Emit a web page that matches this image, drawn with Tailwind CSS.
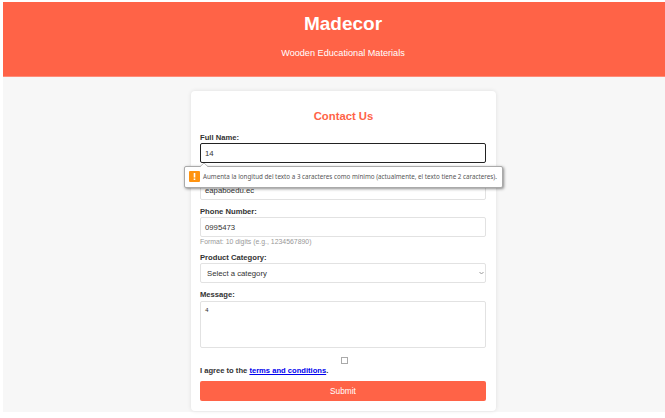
<!DOCTYPE html>
<html lang="en">
<head>
<meta charset="utf-8">
<title>Madecor</title>
<script src="https://cdn.jsdelivr.net/npm/@tailwindcss/browser@4"></script>
</head>
<body class="bg-white w-[665px] h-[418px] overflow-hidden pl-[3px] pt-[2px] font-['Liberation_Sans',Arial,sans-serif] text-[#333]">
<div class="bg-[#f7f7f7] h-[410px]">
  <header class="h-[75px] bg-[#ff6347] border-b border-[#ff8c78] text-white text-center pt-[11px] pl-[18px]">
    <h1 class="text-[19px] leading-[22px] font-bold">Madecor</h1>
    <p class="mt-[12px] text-[9.15px] leading-[12px]">Wooden Educational Materials</p>
  </header>
  <main class="relative ml-[188px] mt-[14px] w-[305px] h-[320px] bg-white rounded-[4px] shadow-[0_0_4px_rgba(0,0,0,0.1)] pl-[9px] pr-[10px] pt-[17px]">
    <h2 class="text-center pl-[1px] text-[11.3px] leading-[17px] h-[18px] font-bold text-[#ff6347]">Contact Us</h2>
    <form class="flex flex-col text-[7.75px]">
      <label class="mt-[6px] h-[10px] leading-[11px] text-[7.65px] font-bold">Full Name:</label>
      <div class="mt-[1px] h-[20px] flex items-center border-[1.5px] border-[#222] rounded-[2px] pl-[4px] pt-[1px]">14</div>
      <label class="mt-[6px] h-[10px] leading-[10px] text-[7.65px] font-bold">Email:</label>
      <div class="mt-[1px] h-[20px] flex items-center border border-[#e2e2e2] rounded-[2px] pl-[4px] pt-[2px]">eapaboedu.ec</div>
      <label class="mt-[6px] h-[10px] leading-[12px] text-[7.65px] font-bold">Phone Number:</label>
      <div class="mt-[1px] h-[20px] flex items-center border border-[#e2e2e2] rounded-[2px] pl-[4px] pt-[1px]">0995473</div>
      <small class="h-[9px] leading-[9px] text-[6.9px] text-[#999]">Format: 10 digits (e.g., 1234567890)</small>
      <label class="mt-[6px] h-[10px] leading-[12px] text-[7.65px] font-bold">Product Category:</label>
      <div class="mt-[1px] h-[20px] flex items-center justify-between border border-[#e2e2e2] rounded-[2px] pl-[6px] pr-[1px]">
        <span class="pt-[1px]">Select a category</span>
        <svg class="w-[5px] h-[4px]" viewBox="0 0 5 4" fill="none" stroke="#999" stroke-width="1"><path d="M.5 1 2.500 3 4.500 1"/></svg>
      </div>
      <label class="mt-[6px] h-[10px] leading-[12px] text-[7.65px] font-bold">Message:</label>
      <div class="mt-[2px] h-[47px] border border-[#e2e2e2] rounded-[2px] pl-[4px] pt-[5px] text-[6px] leading-[8px] font-['Liberation_Mono',monospace]">4</div>
      <span class="mt-[9px] ml-[141px] w-[7px] h-[7px] border border-[#aaa]"></span>
      <label class="mt-[1px] h-[10px] leading-[11px] text-[7.6px] font-bold whitespace-nowrap">I agree to the <a class="text-[#0000ee] underline">terms and conditions</a>.</label>
      <div class="mt-[6px] h-[20px] rounded-[2px] bg-[#ff6347] text-white text-[8.3px] flex items-center justify-center">Submit</div>
    </form>
    <div class="absolute left-[-7px] top-[75px] w-[319px] h-[22px] bg-white border border-[#aaa] rounded-[2px] shadow-[1px_1px_3px_rgba(0,0,0,0.45)] flex items-center pl-[4px]">
      <svg class="absolute left-[15px] top-[-4px] w-[8px] h-[5px]" viewBox="0 0 8 5"><path d="M0 4 4 0 8 4V5H0Z" fill="#fff"/><path d="M0 3.700 4 0 8 3.700" fill="none" stroke="#aaa" stroke-width=".8"/></svg>
      <svg class="w-[11px] h-[11px] shrink-0 -mt-[1px]" viewBox="0 0 11 11"><rect width="11" height="11" rx="1" fill="#ff9310"/><path d="M4.700 2h1.600v4.500H4.700zM4.700 7.500h1.600v1.500H4.700z" fill="#fff"/></svg>
      <span class="ml-[3px] whitespace-nowrap text-[6.26px] text-[#555] font-['Noto_Sans','Open_Sans',sans-serif]">Aumenta la longitud del texto a 3 caracteres como mínimo (actualmente, el texto tiene 2 caracteres).</span>
    </div>
  </main>
</div>
</body>
</html>
